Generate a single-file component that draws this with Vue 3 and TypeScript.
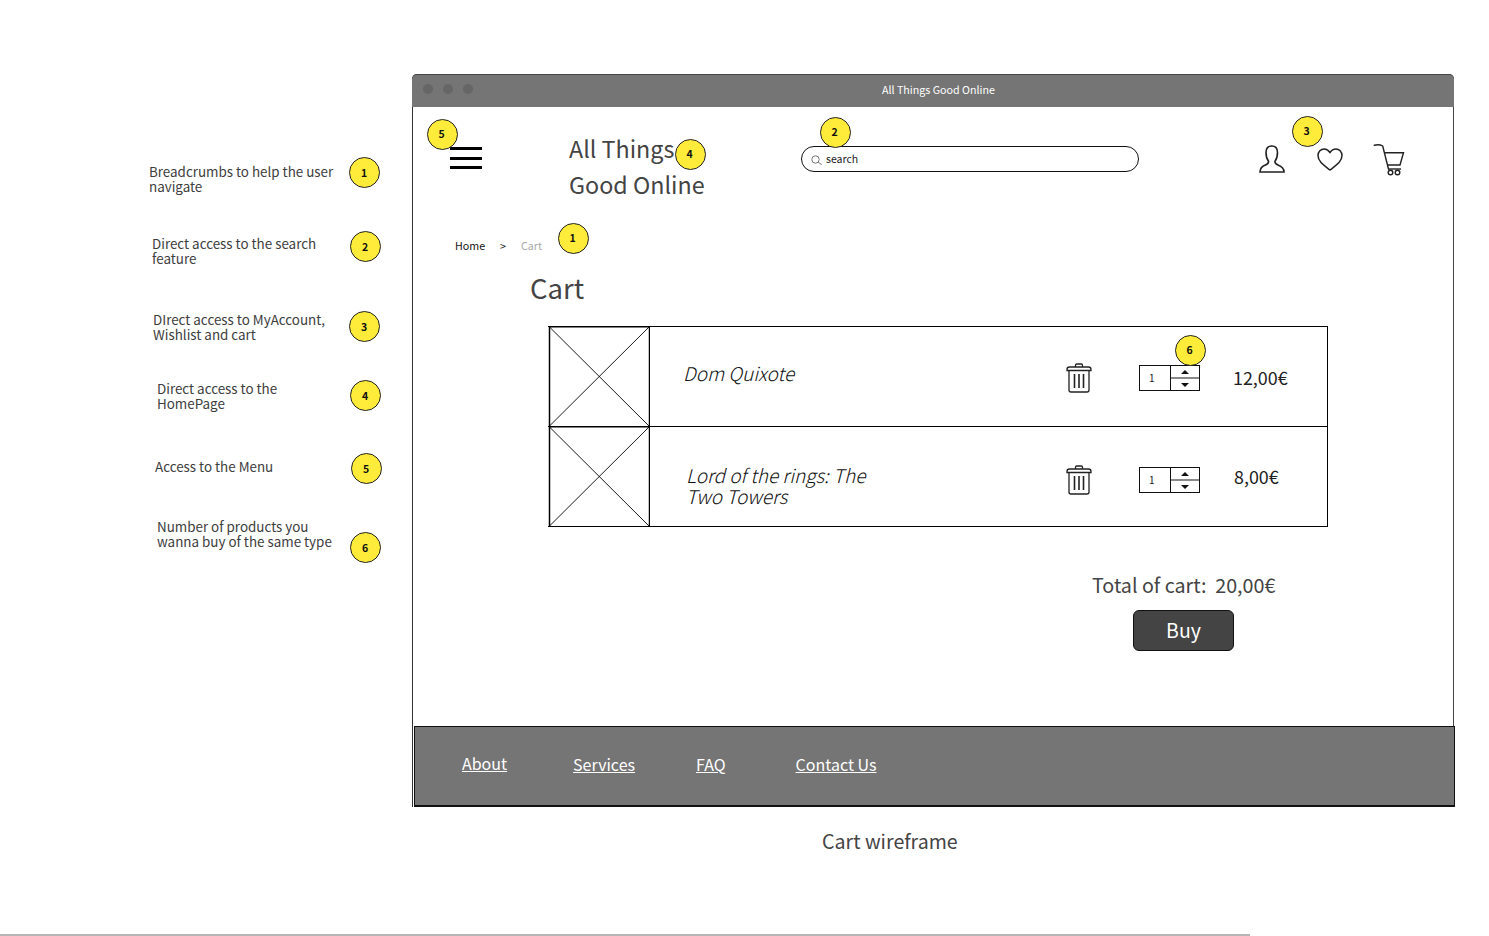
<script setup lang="ts">
interface Note {
  lines: string[]
  indent: number // left edge of the text on the page
  badge: number // left edge of the badge on the page
  gap: number // space above the row
  shift: number // text offset inside the row
  num: number
}

const notes: Note[] = [
  { num: 1, lines: ['Breadcrumbs to help the user', 'navigate'], indent: 149, badge: 349, gap: 157, shift: 7 },
  { num: 2, lines: ['Direct access to the search', 'feature'], indent: 152, badge: 350, gap: 43, shift: 5 },
  { num: 3, lines: ['DIrect access to MyAccount,', 'Wishlist and cart'], indent: 153, badge: 349, gap: 49, shift: 1 },
  { num: 4, lines: ['Direct access to the', 'HomePage'], indent: 157, badge: 350, gap: 38, shift: 1 },
  { num: 5, lines: ['Access to the Menu'], indent: 155, badge: 351, gap: 42, shift: 6 },
  { num: 6, lines: ['Number of products you', 'wanna buy of the same type'], indent: 157, badge: 350, gap: 48, shift: -13 }
]

// badge centres on the page, the window starts at 412,74
const markers = [
  { num: 5, x: 442, y: 134 },
  { num: 4, x: 690, y: 154 },
  { num: 2, x: 835, y: 132 },
  { num: 3, x: 1307, y: 131 },
  { num: 1, x: 573, y: 238 },
  { num: 6, x: 1190, y: 350 }
]

const items = [
  { name: ['Dom Quixote'], price: '12,00€', kind: 'first' },
  { name: ['Lord of the rings: The', 'Two Towers'], price: '8,00€', kind: 'second' }
]

const links = ['About', 'Services', 'FAQ', 'Contact Us']
</script>

<template>
  <div class="page">
    <div class="canvas">
      <aside class="notes">
        <div
          v-for="note in notes"
          :key="note.num"
          class="note"
          :style="{ marginTop: note.gap + 'px', paddingLeft: note.indent + 'px' }"
        >
          <p class="note-text" :style="{ width: note.badge - note.indent + 'px', marginTop: note.shift + 'px' }">
            <span v-for="line in note.lines" :key="line">{{ line }}</span>
          </p>
          <span class="badge">{{ note.num }}</span>
        </div>
      </aside>

      <section class="window">
        <div class="titlebar">
          <i class="dot"></i><i class="dot"></i><i class="dot"></i>
          <span class="window-title">All Things Good Online</span>
        </div>

        <header class="top">
          <div class="burger"><i></i><i></i><i></i></div>
          <div class="logo">All Things<br />Good Online</div>
          <div class="search">
            <svg width="12" height="12" viewBox="0 0 12 12" fill="none" stroke="#555" stroke-width="0.8">
              <circle cx="4.5" cy="6.5" r="3.7" />
              <path d="M7.2 9.2l3.6 2.6" />
            </svg>
            <span>search</span>
          </div>
          <svg class="user" width="26" height="30" viewBox="0 0 26 30" fill="none" stroke="#222" stroke-width="1.6">
            <path d="M1 27H25C25 23.5 23 21.5 19 20C16.5 19 15.8 17.7 16 16.2C17.7 14 18.5 11 18.5 7.5C18.5 3 16.5 1 12.8 1C9 1 7 3 7 7.5C7 11 7.8 14 9.5 16.2C9.7 17.7 9 19 6.5 20C2.5 21.5 1 23.5 1 27Z" />
          </svg>
          <svg class="heart" width="26" height="23" viewBox="0 0 26 23" fill="none" stroke="#222" stroke-width="1.5">
            <path d="M13 22C8 18 1 14 1 7.5C1 3.5 4 1 7 1C10 1 12 3 13 4.5C14 3 16 1 19 1C22 1 25 3.5 25 7.5C25 14 18 18 13 22Z" />
          </svg>
          <svg class="cart" width="32" height="34" viewBox="0 0 32 34" fill="none" stroke="#222" stroke-width="1.4">
            <path d="M1.3 2.2C4 1.5 8 2 9.7 3L15.5 26" stroke-linecap="round" />
            <path d="M11 9.7H30.5L27 22H14" />
            <path d="M15 26H28" />
            <circle cx="17.5" cy="29.5" r="2.3" />
            <circle cx="24.5" cy="29.5" r="2.3" />
          </svg>
        </header>

        <main class="content">
          <nav class="crumbs">
            <span>Home</span>
            <span class="sep">&gt;</span>
            <span class="current">Cart</span>
          </nav>
          <h1 class="title">Cart</h1>

          <div class="cart-list">
            <div v-for="item in items" :key="item.price" class="row" :class="item.kind">
              <svg class="thumb" width="102" height="101" viewBox="0 0 102 101" fill="none" stroke="#000" stroke-width="1">
                <rect x="1.5" y="0.75" width="100" height="100" stroke-width="1.5" />
                <path d="M1 0.5L101.5 100.5M101.5 0.5L1 100.5" stroke-width="0.9" />
              </svg>
              <div class="name">
                <span v-for="line in item.name" :key="line">{{ line }}</span>
              </div>
              <svg class="trash" width="26" height="30" viewBox="0 0 26 30" fill="none" stroke="#222" stroke-width="1.3">
                <path d="M9.5 4V2.2C9.5 1.4 10 1 10.8 1H15.2C16 1 16.5 1.4 16.5 2.2V4" />
                <path d="M1 6.5C1 5 2 4 3.5 4H22.5C24 4 25 5 25 6.5V7.5H1Z" />
                <path d="M3 7.5V27C3 28.3 4 29 5 29H21C22 29 23 28.3 23 27V7.5" />
                <path d="M8.5 11V25M13 11V25M17.5 11V25" stroke-width="1.6" />
              </svg>
              <div class="stepper">
                <span class="qty">1</span>
                <div class="arrows">
                  <span class="btn"><i class="up"></i></span>
                  <span class="btn"><i class="down"></i></span>
                </div>
              </div>
              <div class="price">{{ item.price }}</div>
            </div>
          </div>

          <div class="total">Total of cart:&nbsp; 20,00€</div>
          <button class="buy" type="button">Buy</button>
        </main>

        <footer class="foot">
          <a v-for="link in links" :key="link" class="link" :class="'link-' + link.split(' ')[0].toLowerCase()">{{ link }}</a>
        </footer>

        <span
          v-for="m in markers"
          :key="m.num"
          class="badge over"
          :style="{ left: m.x - 413 - 15.5 + 'px', top: m.y - 74 - 15.5 + 'px' }"
        >{{ m.num }}</span>
      </section>
    </div>

    <div class="caption">Cart wireframe</div>
    <div class="rule"></div>
  </div>
</template>

<style>
html,
body {
  margin: 0;
  background: #fff;
  overflow: hidden;
}
</style>

<style scoped>
.page {
  width: 1489px;
  height: 936px;
  font-family: "Noto Sans CJK SC", "Noto Sans", sans-serif;
  color: #333;
  overflow: hidden;
}

.canvas {
  display: flex;
  height: 807px;
}

.notes {
  width: 412px;
  flex: none;
}

.note {
  display: flex;
  align-items: flex-start;
  height: 31px;
}

.note-text {
  flex: none;
  margin: 0;
  font-size: 13.4px;
  line-height: 15px;
  color: #3d3d3d;
}

.note-text span,
.name span {
  display: block;
  white-space: nowrap;
}

.badge {
  box-sizing: border-box;
  flex: none;
  display: flex;
  align-items: center;
  justify-content: center;
  width: 31px;
  height: 31px;
  padding: 0 1px 1px 0;
  border: 1px solid #222;
  border-radius: 50%;
  background: #ffec3a;
  color: #111;
  font-size: 10.5px;
  font-weight: 700;
}

.badge.over {
  position: absolute;
}

.window {
  position: relative;
  box-sizing: border-box;
  display: flex;
  flex-direction: column;
  width: 1042px;
  height: 733px;
  margin-top: 74px;
  border-left: 1px solid #333;
  border-right: 1px solid #444;
  border-radius: 5px 5px 0 0;
}

.titlebar {
  display: flex;
  align-items: center;
  gap: 10px;
  flex: none;
  box-sizing: border-box;
  height: 33px;
  margin: 0 -1px;
  padding: 0 0 4px 11px;
  border-top: 1px solid #444;
  border-radius: 5px 5px 0 0;
  background: #757575;
}

.dot {
  width: 10px;
  height: 10px;
  border-radius: 50%;
  background: #666;
}

.window-title {
  position: absolute;
  left: 469px;
  top: 8px;
  font-size: 10.7px;
  line-height: 16px;
  color: #fff;
}

.top {
  display: flex;
  align-items: flex-start;
  flex: none;
  height: 108px;
  padding-left: 37px;
}

.burger {
  display: flex;
  flex-direction: column;
  gap: 6.5px;
  flex: none;
  width: 32px;
  margin-top: 40px;
}

.burger i {
  display: block;
  height: 3px;
  background: #000;
}

.logo {
  flex: none;
  width: 232px;
  margin: 23px 0 0 87px;
  font-size: 23.3px;
  line-height: 36px;
  color: #444;
}

.search {
  box-sizing: border-box;
  display: flex;
  align-items: center;
  gap: 3px;
  flex: none;
  width: 338px;
  height: 26px;
  margin-top: 39px;
  padding: 0 0 2px 9px;
  border: 1px solid #111;
  border-radius: 13px;
  font-size: 10.5px;
  color: #222;
}

.search svg {
  margin-top: 2px;
}

.user {
  flex: none;
  margin: 38px 0 0 120px;
}

.heart {
  flex: none;
  margin: 41px 0 0 32px;
}

.cart {
  flex: none;
  margin: 36px 0 0 30px;
}

.content {
  flex: 1;
  display: flex;
  flex-direction: column;
  align-items: flex-start;
}

.crumbs {
  display: flex;
  margin: 23px 0 0 42px;
  font-size: 10.7px;
  line-height: 16px;
  color: #111;
}

.sep {
  margin-left: 15px;
}

.current {
  margin-left: 15px;
  color: #aaa;
}

.title {
  margin: 13px 0 0 117px;
  font-size: 27.5px;
  font-weight: 400;
  line-height: 40px;
  color: #444;
}

.cart-list {
  box-sizing: border-box;
  width: 780px;
  height: 201px;
  margin: 19px 0 0 135px;
  border: 1px solid #000;
  border-left: 0;
}

.row {
  display: flex;
  align-items: flex-start;
  height: 99px;
}

.row + .row {
  box-sizing: content-box;
  border-top: 1px solid #000;
}

.thumb {
  flex: none;
  margin-top: -1px;
}

.name {
  flex: none;
  width: 380px;
  font-size: 19px;
  font-style: italic;
  font-weight: 300;
  letter-spacing: -0.03px;
  line-height: 21px;
  color: #111;
}

.first .name {
  margin: 35px 0 0 33px;
}

.second .name {
  margin: 37px 0 0 36px;
}

.trash {
  flex: none;
  margin-top: 36px;
}

.first .trash {
  margin-left: 3px;
}

.second .trash {
  margin-top: 38px;
}

.stepper {
  box-sizing: border-box;
  display: flex;
  flex: none;
  width: 61px;
  height: 26px;
  margin: 38px 0 0 47px;
  border: 1px solid #111;
}

.second .stepper {
  margin-top: 40px;
}

.qty {
  box-sizing: border-box;
  flex: none;
  width: 30px;
  padding-left: 9px;
  font-size: 10px;
  line-height: 24px;
  color: #222;
}

.arrows {
  flex: 1;
  display: flex;
  flex-direction: column;
  border-left: 1px solid #111;
}

.btn {
  flex: 1;
  display: flex;
  align-items: center;
  justify-content: center;
}

.btn + .btn {
  border-top: 2px solid #888;
}

.up,
.down {
  width: 0;
  height: 0;
  border-left: 4px solid transparent;
  border-right: 4px solid transparent;
}

.up {
  border-bottom: 4px solid #111;
}

.down {
  border-top: 4px solid #111;
}

.price {
  flex: none;
  margin: 38px 0 0 33px;
  font-size: 17.9px;
  line-height: 24px;
  color: #222;
}

.second .price {
  margin: 37px 0 0 34px;
}

.total {
  margin: 44px 0 0 679px;
  font-size: 19.7px;
  line-height: 28px;
  color: #444;
}

.buy {
  box-sizing: border-box;
  width: 101px;
  height: 41px;
  margin: 11px 0 0 720px;
  padding: 0 0 3px;
  border: 1px solid #111;
  border-radius: 6px;
  background: #444;
  color: #fff;
  font-family: inherit;
  font-size: 19.5px;
}

.foot {
  box-sizing: border-box;
  display: flex;
  align-items: center;
  flex: none;
  width: 1041px;
  height: 81px;
  margin-left: 1px;
  padding: 0 0 4px 47px;
  border: 1px solid #111;
  border-bottom-width: 2px;
  background: #757575;
  color: #fff;
  font-size: 16px;
}

.link {
  text-decoration: underline;
  line-height: 24px;
}

.link-about {
  margin-top: -2px;
}

.link-services {
  margin-left: 66px;
}

.link-faq {
  margin-left: 61px;
}

.link-contact {
  margin-left: 70px;
}

.caption {
  margin: 20px 0 0 822px;
  font-size: 19.6px;
  line-height: 28px;
  color: #444;
}

.rule {
  width: 1250px;
  height: 2px;
  margin-top: 79px;
  background: #b5b5b5;
}
</style>
